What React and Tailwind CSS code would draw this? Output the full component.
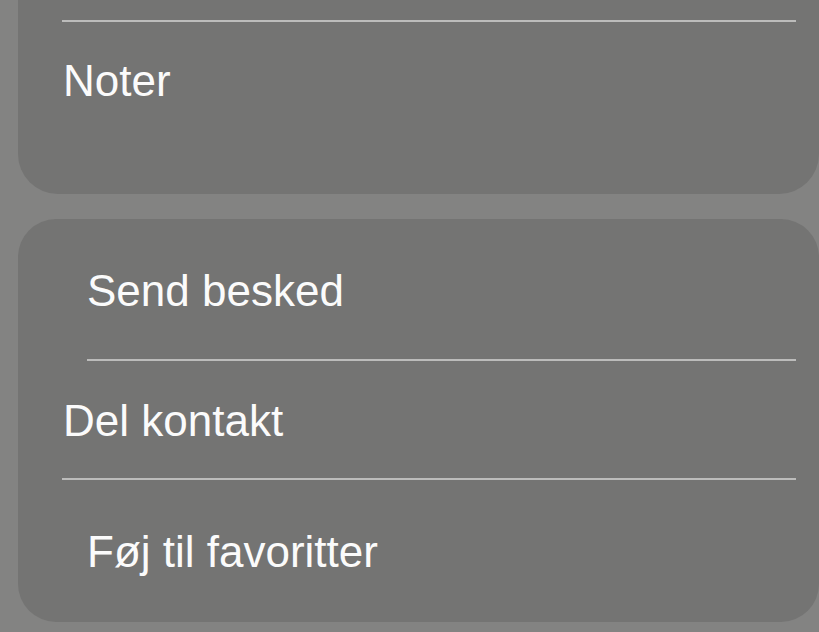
import React from "react";

const FONT = { fontFamily: '"Liberation Sans", Arial, sans-serif' };

function Divider({ inset }) {
  return <div className={`h-[2px] bg-[#bcbcbb] mr-[23px] ${inset}`} />;
}

export default function App() {
  return (
    <div className="w-[819px] h-[632px] overflow-hidden bg-[#838382] pl-[18px]" style={FONT}>
      <div className="bg-[#747473] rounded-b-[40px] h-[194px] flex flex-col">
        <div className="h-[20px]" />
        <Divider inset="ml-[44px]" />
        <div className="h-[118px] flex items-center pl-[45px] text-[44px] text-[#fbfbfb] leading-none">
          Noter
        </div>
      </div>

      <div className="mt-[25px] bg-[#747473] rounded-[38px] h-[403px] flex flex-col">
        <div className="h-[140px] flex items-center pt-[4px] pl-[69px] text-[44px] text-[#fbfbfb] leading-none">
          Send besked
        </div>
        <Divider inset="ml-[69px]" />
        <div className="h-[117px] flex items-center pt-[3px] pl-[45px] text-[44px] text-[#fbfbfb] leading-none">
          Del kontakt
        </div>
        <Divider inset="ml-[44px]" />
        <div className="flex-1 flex items-center pt-[2px] pl-[69px] text-[44px] text-[#fbfbfb] leading-none">
          Føj til favoritter
        </div>
      </div>
    </div>
  );
}
